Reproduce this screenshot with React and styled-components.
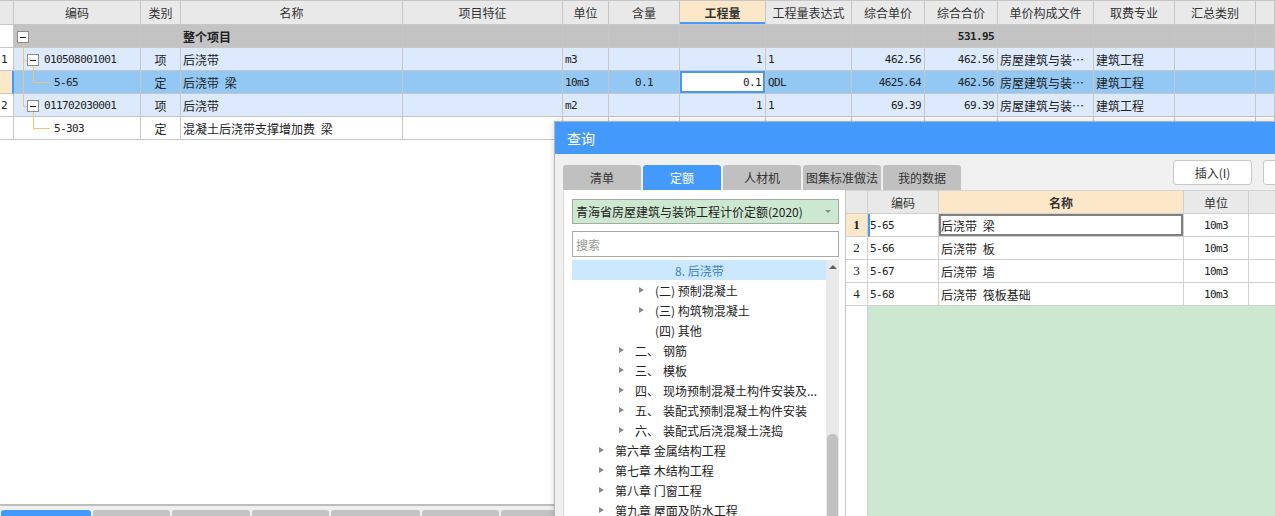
import React from "react";
import styled, { createGlobalStyle, css } from "styled-components";

const GlobalStyle = createGlobalStyle`
  html, body {
    margin: 0;
    padding: 0;
    background: #fff;
  }
  body {
    font-family: "Noto Sans CJK SC", "Noto Sans", sans-serif;
    font-size: 12px;
    color: #222;
  }
  * {
    box-sizing: border-box;
  }
`;

const mono = css`
  font-family: "DejaVu Sans Mono", "Liberation Mono", monospace;
  font-size: 11px;
  letter-spacing: -0.6px;
`;

const tones = {
  gray: "#c3c3c3",
  blue: "#dde9fc",
  sel: "#93c8f5",
  white: "#ffffff",
};

const Screen = styled.div`
  position: relative;
  width: 1275px;
  height: 516px;
  overflow: hidden;
  display: flex;
  flex-direction: column;
  background: #fff;
`;

/* ---------- main bill grid ---------- */

const MainGrid = styled.div`
  flex: 1;
  display: grid;
  grid-template-columns: 14px 127px 40px 222px 160px 46px 71px 86px 86px 73px 73px 96px 81px 81px 1fr;
  grid-template-rows: 24px;
  grid-auto-rows: 23px;
  align-content: start;
  border-top: 1px solid #c6c6c6;
`;

const HeadCell = styled.div`
  display: flex;
  align-items: center;
  justify-content: center;
  background: ${(p) => (p.$active ? "#fde7c9" : "#e9e9e9")};
  font-weight: ${(p) => (p.$active ? 700 : 400)};
  color: #333;
  border-right: 1px solid #c6c6c6;
  border-bottom: 1px solid #c6c6c6;
  box-shadow: ${(p) => (p.$active ? "inset 0 -2px 0 #4499fd" : "none")};
  white-space: nowrap;
  overflow: hidden;
`;

const Cell = styled.div`
  display: flex;
  align-items: center;
  justify-content: ${(p) => p.$align || "flex-start"};
  padding: 0 ${(p) => (p.$align === "flex-end" ? "3px" : "2px")};
  background: ${(p) => p.$bg};
  border-right: 1px solid #c6c6c6;
  border-bottom: 1px solid #c6c6c6;
  font-weight: ${(p) => (p.$bold ? 700 : 400)};
  white-space: pre;
  word-spacing: 3px;
  overflow: hidden;
  ${(p) => p.$mono && mono}
  ${(p) =>
    p.$editing &&
    css`
      background: #fff;
      box-shadow: inset 0 0 0 2px #4499fd;
      padding-right: 4px;
    `}
`;

const NumCell = styled(Cell)`
  padding: 0 0 0 1px;
  ${(p) =>
    p.$current &&
    css`
      background: #fde7c9;
      border-right: 2px solid #4499fd;
    `}
`;

const CodeCell = styled(Cell)`
  padding: 0;
`;

const TreeGlyph = styled.svg`
  flex: none;
  display: block;
`;

const LINE = "#f5c07a";

function Minus({ x }) {
  return (
    <>
      <rect x={x + 0.5} y="6.5" width="11" height="11" fill="#fff" stroke="#8c8c8c" />
      <line x1={x + 3} y1="12.5" x2={x + 9} y2="12.5" stroke="#222" />
    </>
  );
}

function TreeLines({ kind }) {
  if (kind === "root") {
    return (
      <TreeGlyph width="20" height="22">
        <line x1="9.5" y1="18" x2="9.5" y2="22" stroke={LINE} />
        <Minus x={3} />
      </TreeGlyph>
    );
  }
  if (kind === "item" || kind === "lastItem") {
    return (
      <TreeGlyph width="30" height="22">
        <line x1="9.5" y1="0" x2="9.5" y2={kind === "item" ? 22 : 12.5} stroke={LINE} />
        <line x1="9" y1="12.5" x2="13" y2="12.5" stroke={LINE} />
        <line x1="19.5" y1="18" x2="19.5" y2="22" stroke={LINE} />
        <Minus x={13} />
      </TreeGlyph>
    );
  }
  return (
    <TreeGlyph width="40" height="22">
      {kind === "child" && <line x1="9.5" y1="0" x2="9.5" y2="22" stroke={LINE} />}
      <line x1="19.5" y1="0" x2="19.5" y2="11.5" stroke={LINE} />
      <line x1="19" y1="11.5" x2="36" y2="11.5" stroke={LINE} />
    </TreeGlyph>
  );
}

const headers = [
  "",
  "编码",
  "类别",
  "名称",
  "项目特征",
  "单位",
  "含量",
  "工程量",
  "工程量表达式",
  "综合单价",
  "综合合价",
  "单价构成文件",
  "取费专业",
  "汇总类别",
  "",
];

const FILE = "房屋建筑与装…";

const billRows = [
  { tone: "gray", num: "", tree: "root", code: "", kind: "", name: "整个项目", total: "531.95" },
  {
    tone: "blue", num: "1", tree: "item", code: "010508001001", kind: "项", name: "后浇带",
    unit: "m3", amount: "1", expr: "1", price: "462.56", total: "462.56", file: FILE, major: "建筑工程",
  },
  {
    tone: "sel", num: "", current: true, tree: "child", code: "5-65", kind: "定", name: "后浇带 梁",
    unit: "10m3", ratio: "0.1", amount: "0.1", editing: true, expr: "QDL", price: "4625.64",
    total: "462.56", file: FILE, major: "建筑工程",
  },
  {
    tone: "blue", num: "2", tree: "lastItem", code: "011702030001", kind: "项", name: "后浇带",
    unit: "m2", amount: "1", expr: "1", price: "69.39", total: "69.39", file: FILE, major: "建筑工程",
  },
  { tone: "white", num: "", tree: "lastChild", code: "5-303", kind: "定", name: "混凝土后浇带支撑增加费 梁" },
];

function BillRow({ row }) {
  const bg = tones[row.tone];
  const root = row.tree === "root";
  return (
    <>
      <NumCell $bg="#fff" $mono $current={row.current}>{row.num}</NumCell>
      <CodeCell $bg={bg} $mono>
        <TreeLines kind={row.tree} />
        {row.code}
      </CodeCell>
      <Cell $bg={bg} $align="center">{row.kind}</Cell>
      <Cell $bg={bg} $bold={root}>{row.name}</Cell>
      <Cell $bg={bg} />
      <Cell $bg={bg} $mono>{row.unit}</Cell>
      <Cell $bg={bg} $mono $align="center">{row.ratio}</Cell>
      <Cell $bg={bg} $mono $align="flex-end" $editing={row.editing}>{row.amount}</Cell>
      <Cell $bg={bg} $mono>{row.expr}</Cell>
      <Cell $bg={bg} $mono $align="flex-end">{row.price}</Cell>
      <Cell $bg={bg} $mono $align="flex-end" $bold={root}>{row.total}</Cell>
      <Cell $bg={bg}>{row.file}</Cell>
      <Cell $bg={bg}>{row.major}</Cell>
      <Cell $bg={bg} />
      <Cell $bg={bg} />
    </>
  );
}

/* ---------- bottom sheet tabs ---------- */

const BottomBar = styled.div`
  flex: none;
  height: 12px;
  border-top: 2px solid #bdbdbd;
  background: #f0f0f0;
  display: flex;
  align-items: flex-end;
  gap: 2px;
  padding-left: 1px;
`;

const SheetTab = styled.div`
  flex: none;
  width: ${(p) => p.$w}px;
  height: 6px;
  border-radius: 3px 3px 0 0;
  background: ${(p) => (p.$active ? "#4499fd" : "#c3c3c3")};
`;

const sheetTabs = [90, 77, 78, 77, 89, 77, 77];

/* ---------- query dialog ---------- */

const Dialog = styled.div`
  position: absolute;
  left: 554px;
  top: 121px;
  width: 797px;
  height: 420px;
  border: 1px solid #b4b4b4;
  background: #f0f0f0;
  display: flex;
  flex-direction: column;
  box-shadow: 0 0 6px rgba(0, 0, 0, 0.18);
`;

const TitleBar = styled.div`
  flex: none;
  height: 32px;
  background: #4499fd;
  color: #fff;
  font-size: 14px;
  display: flex;
  align-items: center;
  padding-left: 12px;
`;

const Body = styled.div`
  flex: 1;
  min-height: 0;
  display: flex;
  flex-direction: column;
  padding: 0 8px;
`;

const Toolbar = styled.div`
  flex: none;
  height: 36px;
  display: flex;
  align-items: flex-end;
`;

const Tabs = styled.div`
  display: flex;
  gap: 2px;
`;

const Tab = styled.div`
  width: 78px;
  height: 25px;
  border-radius: 3px 3px 0 0;
  display: flex;
  align-items: center;
  justify-content: center;
  background: ${(p) => (p.$active ? "#4499fd" : "#c0c0c0")};
  color: ${(p) => (p.$active ? "#fff" : "#333")};
  white-space: nowrap;
  overflow: hidden;
`;

const Actions = styled.div`
  margin-left: auto;
  margin-bottom: 5px;
  display: flex;
  gap: 11px;
`;

const Button = styled.div`
  width: 79px;
  height: 25px;
  border: 1px solid #c8c8c8;
  border-radius: 3px;
  background: #fff;
  color: #333;
  display: flex;
  align-items: center;
  justify-content: center;
`;

const Content = styled.div`
  flex: 1;
  min-height: 0;
  display: flex;
`;

const LeftPanel = styled.div`
  flex: none;
  width: 282px;
  background: #fff;
  border-left: 1px solid #d8d8d8;
  padding: 9px 6px 0 8px;
  display: flex;
  flex-direction: column;
`;

const Select = styled.div`
  flex: none;
  height: 25px;
  border: 1px solid #a8a8a8;
  background: #cde8d0;
  display: flex;
  align-items: center;
  padding: 0 7px 0 3px;
  color: #222;
  white-space: nowrap;
`;

const Caret = styled.span`
  margin-left: auto;
  width: 0;
  height: 0;
  border-left: 3px solid transparent;
  border-right: 3px solid transparent;
  border-top: 3px solid #8a8a8a;
`;

const Search = styled.input`
  flex: none;
  margin-top: 7px;
  height: 26px;
  border: 1px solid #a8a8a8;
  padding: 0 3px;
  font: inherit;
  outline: none;
  &::placeholder {
    color: #9a9a9a;
  }
`;

const TreeBox = styled.div`
  flex: 1;
  min-height: 0;
  margin-top: 3px;
  display: flex;
`;

const TreeList = styled.div`
  flex: 1;
  min-width: 0;
  overflow: hidden;
`;

const TreeRow = styled.div`
  height: 20px;
  display: flex;
  align-items: center;
  padding-left: ${(p) => 27 + p.$level * 20}px;
  background: ${(p) => (p.$selected ? "#cce8ff" : "transparent")};
  color: ${(p) => (p.$selected ? "#3a7fd6" : "#222")};
  white-space: nowrap;
`;

const Expander = styled.span`
  flex: none;
  width: 0;
  height: 0;
  margin-right: 11px;
  border-left: 5px solid ${(p) => (p.$leaf ? "transparent" : "#8a8a8a")};
  border-top: 3.5px solid transparent;
  border-bottom: 3.5px solid transparent;
`;

const Prefix = styled.span`
  margin-right: 4px;
`;

const ScrollTrack = styled.div`
  flex: none;
  width: 13px;
  background: #e9e9e9;
  display: flex;
  flex-direction: column;
  align-items: center;
`;

const ScrollUp = styled.span`
  margin-top: 5px;
  width: 0;
  height: 0;
  border-left: 4px solid transparent;
  border-right: 4px solid transparent;
  border-bottom: 4px solid #606060;
`;

const ScrollThumb = styled.div`
  margin-top: 165px;
  width: 11px;
  height: 110px;
  border-radius: 5px;
  background: #c1c1c1;
`;

const treeItems = [
  { level: 3, label: "8. 后浇带", selected: true, leaf: true },
  { level: 2, label: "(二) 预制混凝土" },
  { level: 2, label: "(三) 构筑物混凝土" },
  { level: 2, label: "(四) 其他", leaf: true },
  { level: 1, prefix: "二、", label: "钢筋" },
  { level: 1, prefix: "三、", label: "模板" },
  { level: 1, prefix: "四、", label: "现场预制混凝土构件安装及..." },
  { level: 1, prefix: "五、", label: "装配式预制混凝土构件安装" },
  { level: 1, prefix: "六、", label: "装配式后浇混凝土浇捣" },
  { level: 0, label: "第六章 金属结构工程" },
  { level: 0, label: "第七章 木结构工程" },
  { level: 0, label: "第八章 门窗工程" },
  { level: 0, label: "第九章 屋面及防水工程" },
];

const QuotaGrid = styled.div`
  flex: 1;
  min-width: 0;
  display: grid;
  grid-template-columns: 22px 71px 245px 65px 1fr;
  grid-template-rows: repeat(5, 23px) 1fr;
  border-left: 1px solid #c6c6c6;
  border-top: 1px solid #d4d4d4;
  background: #fff;
`;

const QHead = styled.div`
  display: flex;
  align-items: center;
  justify-content: center;
  background: ${(p) => (p.$active ? "#fde7c9" : "#e9e9e9")};
  font-weight: ${(p) => (p.$active ? 700 : 400)};
  color: #333;
  border-right: 1px solid #d0d0d0;
  border-bottom: 1px solid #d0d0d0;
`;

const QCell = styled.div`
  display: flex;
  align-items: center;
  justify-content: ${(p) => p.$align || "flex-start"};
  padding: 0 2px;
  border-right: 1px solid #d0d0d0;
  border-bottom: 1px solid #d0d0d0;
  white-space: pre;
  word-spacing: 3px;
  overflow: hidden;
  ${(p) => p.$mono && mono}
  ${(p) => p.$marked && "border-left: 2px solid #4499fd; padding-left: 0;"}
  ${(p) => p.$focused && "box-shadow: inset 0 0 0 2px #808080;"}
`;

const QNum = styled(QCell)`
  justify-content: center;
  padding: 0;
  font-family: "Liberation Serif", "DejaVu Serif", serif;
  font-size: 13px;
  background: ${(p) => (p.$current ? "#fde7c9" : "#fff")};
  font-weight: ${(p) => (p.$current ? 700 : 400)};
`;

const QBlank = styled.div`
  border-right: 1px solid #d0d0d0;
`;

const QFill = styled.div`
  grid-column: 2 / -1;
  background: #cde8d0;
`;

const quotas = [
  { code: "5-65", name: "后浇带 梁" },
  { code: "5-66", name: "后浇带 板" },
  { code: "5-67", name: "后浇带 墙" },
  { code: "5-68", name: "后浇带 筏板基础" },
];

export default function App() {
  return (
    <Screen>
      <GlobalStyle />
      <MainGrid>
        {headers.map((h, i) => (
          <HeadCell key={i} $active={h === "工程量"}>
            {h}
          </HeadCell>
        ))}
        {billRows.map((row, i) => (
          <BillRow key={i} row={row} />
        ))}
      </MainGrid>
      <BottomBar>
        {sheetTabs.map((w, i) => (
          <SheetTab key={i} $w={w} $active={i === 0} />
        ))}
      </BottomBar>

      <Dialog>
        <TitleBar>查询</TitleBar>
        <Body>
          <Toolbar>
            <Tabs>
              {["清单", "定额", "人材机", "图集标准做法", "我的数据"].map((t) => (
                <Tab key={t} $active={t === "定额"}>
                  {t}
                </Tab>
              ))}
            </Tabs>
            <Actions>
              <Button>插入(I)</Button>
              <Button />
            </Actions>
          </Toolbar>
          <Content>
            <LeftPanel>
              <Select>
                青海省房屋建筑与装饰工程计价定额(2020)
                <Caret />
              </Select>
              <Search placeholder="搜索" />
              <TreeBox>
                <TreeList>
                  {treeItems.map((item, i) => (
                    <TreeRow key={i} $level={item.level} $selected={item.selected}>
                      <Expander $leaf={item.leaf} />
                      {item.prefix && <Prefix>{item.prefix}</Prefix>}
                      {item.label}
                    </TreeRow>
                  ))}
                </TreeList>
                <ScrollTrack>
                  <ScrollUp />
                  <ScrollThumb />
                </ScrollTrack>
              </TreeBox>
            </LeftPanel>
            <QuotaGrid>
              <QHead />
              <QHead>编码</QHead>
              <QHead $active>名称</QHead>
              <QHead>单位</QHead>
              <QHead />
              {quotas.map((q, i) => (
                <React.Fragment key={q.code}>
                  <QNum $current={i === 0}>{i + 1}</QNum>
                  <QCell $mono $marked={i === 0}>{q.code}</QCell>
                  <QCell $focused={i === 0}>{q.name}</QCell>
                  <QCell $mono $align="center">10m3</QCell>
                  <QCell />
                </React.Fragment>
              ))}
              <QBlank />
              <QFill />
            </QuotaGrid>
          </Content>
        </Body>
      </Dialog>
    </Screen>
  );
}
